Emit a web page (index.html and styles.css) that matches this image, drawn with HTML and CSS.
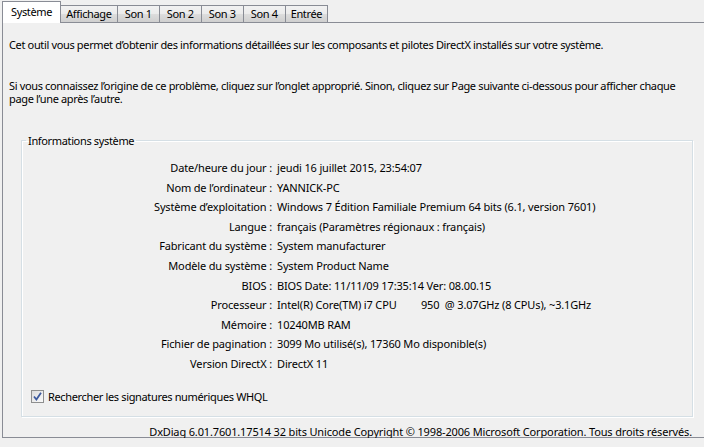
FILE: index.html
```html
<!DOCTYPE html>
<html lang="fr">
<head>
  <meta charset="UTF-8">
  <title>Outil de diagnostic DirectX</title>
  <link rel="stylesheet" href="styles.css">
</head>
<body>
  <div class="tabs">
    <div class="tab active">Système</div>
    <div class="tab">Affichage</div>
    <div class="tab">Son 1</div>
    <div class="tab">Son 2</div>
    <div class="tab">Son 3</div>
    <div class="tab">Son 4</div>
    <div class="tab">Entrée</div>
  </div>
  <div class="panel">
    <p class="intro">Cet outil vous permet d’obtenir des informations détaillées sur les composants et pilotes DirectX installés sur votre système.</p>
    <p class="intro second">Si vous connaissez l’origine de ce problème, cliquez sur l’onglet approprié. Sinon, cliquez sur Page suivante ci-dessous pour afficher chaque page l’une après l’autre.</p>
    <div class="content">
      <fieldset class="group">
        <legend>Informations système</legend>
        <div class="rows">
          <span class="key">Date/heure du jour :</span><span>jeudi 16 juillet 2015, 23:54:07</span>
          <span class="key">Nom de l’ordinateur :</span><span>YANNICK-PC</span>
          <span class="key">Système d’exploitation :</span><span>Windows 7 Édition Familiale Premium 64 bits (6.1, version 7601)</span>
          <span class="key">Langue :</span><span>français (Paramètres régionaux : français)</span>
          <span class="key">Fabricant du système :</span><span>System manufacturer</span>
          <span class="key">Modèle du système :</span><span>System Product Name</span>
          <span class="key">BIOS :</span><span>BIOS Date: 11/11/09 17:35:14 Ver: 08.00.15</span>
          <span class="key">Processeur :</span><span class="pre">Intel(R) Core(TM) i7 CPU         950  @ 3.07GHz (8 CPUs), ~3.1GHz</span>
          <span class="key">Mémoire :</span><span>10240MB RAM</span>
          <span class="key">Fichier de pagination :</span><span>3099 Mo utilisé(s), 17360 Mo disponible(s)</span>
          <span class="key">Version DirectX :</span><span>DirectX 11</span>
        </div>
        <label class="check">
          <span class="box">
            <svg width="9" height="9" viewBox="0 0 9 9"><path d="M1 4.5 L3.4 7.5 L8 0.8" fill="none" stroke="#3d5a9e" stroke-width="1.8"/></svg>
          </span>
          Rechercher les signatures numériques WHQL
        </label>
      </fieldset>
      <p class="footer">DxDiag 6.01.7601.17514 32 bits Unicode Copyright © 1998-2006 Microsoft Corporation. Tous droits réservés.</p>
    </div>
  </div>
</body>
</html>
```
FILE: styles.css
```css
body { margin: 0; background: #f0f0f0; font-family: "Noto Sans", "Open Sans", sans-serif; font-size: 11px; letter-spacing: -0.15px; color: #000; overflow: hidden; }
p { margin: 0; }

.intro, .group legend, .check, .tab { letter-spacing: -0.35px; }

.tabs { display: flex; align-items: flex-end; height: 22px; padding-left: 2px; position: relative; z-index: 1; }
.tab { height: 17px; min-width: 43px; line-height: 16px; padding: 0 5px; margin-right: -1px; text-align: center; border: 1px solid #898c95; border-bottom: none; box-sizing: border-box; background: linear-gradient(#f2f2f2 0%, #ebebeb 50%, #dddddd 50%, #cfcfcf 100%); }
.tab.active { height: 22px; line-height: 19px; margin-bottom: -1px; padding: 0 8px; background: #fff; position: relative; z-index: 2; }

.panel { margin-left: 2px; width: 720px; height: 416px; box-sizing: border-box; border: 1px solid #898c95; border-right: none; padding: 14px 0 0 6px; }
.intro { line-height: 15px; }
.intro.second { margin-top: 27px; line-height: 13px; width: 690px; }

.content { margin: 28px 0 0 12px; width: 672px; }
.group { margin: 0; padding: 10px 0 9px 0; border: 1px solid #d5dfe5; box-shadow: inset 1px 1px 0 #fff, 1px 1px 0 #fff; }
.group legend { margin-left: 4px; padding: 0 2px; line-height: 15px; }
.rows { display: grid; grid-template-columns: 250px 1fr; column-gap: 5px; line-height: 19.6px; }
.key { text-align: right; }
.pre { white-space: pre; }

.check { display: flex; align-items: center; gap: 4px; margin: 13px 0 0 9px; height: 20px; }
.box { display: flex; align-items: center; justify-content: center; width: 13px; height: 13px; box-sizing: border-box; border: 1px solid #8e8f8f; background: linear-gradient(135deg, #dcdcdc, #fafafa); }

.footer { text-align: right; padding-right: 1px; margin-top: 7px; line-height: 15px; }
```
